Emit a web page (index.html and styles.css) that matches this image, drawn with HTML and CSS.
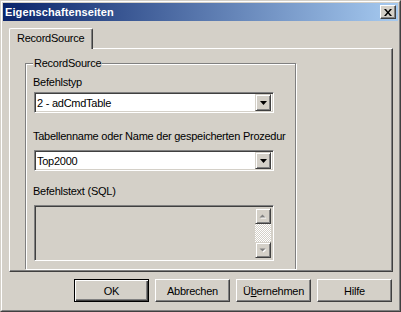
FILE: index.html
```html
<!DOCTYPE html>
<html lang="de">
<head>
    <meta charset="UTF-8">
    <title>Eigenschaftenseiten</title>
    <link rel="stylesheet" href="styles.css">
</head>
<body>
    <div class="window">
        <div class="frame">
            <div class="titlebar">
                <span class="title">Eigenschaftenseiten</span>
                <span class="close-btn">
                    <svg width="8" height="7" viewBox="0 0 8 7"><path d="M0 0h2l2 2.5L6 0h2L5 3.5 8 7H6L4 4.5 2 7H0l3-3.5z" fill="#000"/></svg>
                </span>
            </div>
            <div class="dialog-body">
                <div class="tabs">
                    <div class="tab active">RecordSource</div>
                </div>
                <div class="tab-panel">
                    <fieldset class="group">
                        <legend>RecordSource</legend>
                        <label class="field-label label-type">Befehlstyp</label>
                        <div class="combo combo-type">
                            <span class="combo-text">2 - adCmdTable</span>
                            <span class="combo-btn">
                                <svg width="7" height="4" viewBox="0 0 7 4"><path d="M0 0h7L3.5 4z" fill="#000"/></svg>
                            </span>
                        </div>
                        <label class="field-label label-table">Tabellenname oder Name der gespeicherten Prozedur</label>
                        <div class="combo combo-table">
                            <span class="combo-text">Top2000</span>
                            <span class="combo-btn">
                                <svg width="7" height="4" viewBox="0 0 7 4"><path d="M0 0h7L3.5 4z" fill="#000"/></svg>
                            </span>
                        </div>
                        <label class="field-label label-sql">Befehlstext (SQL)</label>
                        <div class="memo">
                            <div class="scrollbar">
                                <span class="scroll-btn">
                                    <svg width="8" height="5" viewBox="0 0 8 5"><path d="M1.5 4.5h6L4.5 1.5z" fill="#fff"/><path d="M0.5 3.5h6L3.5 0.5z" fill="#808080"/></svg>
                                </span>
                                <span class="scroll-track"></span>
                                <span class="scroll-btn">
                                    <svg width="8" height="5" viewBox="0 0 8 5"><path d="M1.5 1.5h6L4.5 4.5z" fill="#fff"/><path d="M0.5 0.5h6L3.5 3.5z" fill="#808080"/></svg>
                                </span>
                            </div>
                        </div>
                    </fieldset>
                </div>
                <div class="buttons">
                    <button class="btn default">OK</button>
                    <button class="btn">Abbrechen</button>
                    <button class="btn">Ü<span class="accel">b</span>ernehmen</button>
                    <button class="btn">Hilfe</button>
                </div>
            </div>
        </div>
    </div>
</body>
</html>
```

FILE: styles.css
```css
/* Classic Windows property dialog */
body {
    margin: 0;
    font-family: "Liberation Sans", Arial, sans-serif;
    font-size: 11px;
    letter-spacing: -0.25px;
    color: #000;
    background-color: #d4d0c8;
}

.window {
    width: 401px;
    height: 312px;
    box-sizing: border-box;
    border: 1px solid;
    border-color: #d4d0c8 #404040 #404040 #d4d0c8;
}

.frame {
    height: 100%;
    box-sizing: border-box;
    border: 1px solid;
    border-color: #fff #808080 #808080 #fff;
    padding: 1px;
    display: flex;
    flex-direction: column;
}

.titlebar {
    height: 18px;
    display: flex;
    align-items: center;
    justify-content: space-between;
    padding: 0 2px 0 2px;
    background: linear-gradient(to right, #0a246a, #a6caf0);
}

.title {
    color: #fff;
    font-weight: bold;
    font-size: 11px;
    letter-spacing: 0.1px;
}

.close-btn {
    width: 16px;
    height: 14px;
    box-sizing: border-box;
    display: flex;
    align-items: center;
    justify-content: center;
    background-color: #d4d0c8;
    border: 1px solid;
    border-color: #fff #404040 #404040 #fff;
    box-shadow: inset -1px -1px #808080;
}

.dialog-body {
    flex: 1;
    padding: 7px 5px 0 6px;
    display: flex;
    flex-direction: column;
}

.tabs {
    display: flex;
    height: 20px;
}

.tab {
    width: 84px;
    height: 21px;
    box-sizing: border-box;
    padding: 3px 0 0 7px;
    border: 1px solid;
    border-color: #fff #404040 transparent #fff;
    border-bottom: 0;
    border-radius: 2px 2px 0 0;
    box-shadow: inset -1px 0 #808080;
    background-color: #d4d0c8;
    position: relative;
    z-index: 1;
}

.tab-panel {
    height: 224px;
    box-sizing: border-box;
    border: 1px solid;
    border-color: #fff #404040 #404040 #fff;
    box-shadow: inset -1px -1px #808080;
    padding: 8px 0 2px 15px;
    display: flex;
    flex-direction: column;
}

.group {
    flex: 1;
    width: 271px;
    box-sizing: border-box;
    margin: 0;
    min-width: 0;
    padding: 0 0 0 7px;
    border: 1px solid #808080;
    border-bottom: 0;
    box-shadow: inset 1px 1px #fff, 1px 1px #fff;
}

.group legend {
    padding: 0 1px;
    line-height: 13px;
    background-color: #d4d0c8;
}

.field-label {
    display: block;
    line-height: 13px;
    height: 13px;
    white-space: nowrap;
}

.label-type {
    margin-top: 6px;
}

.label-table {
    margin-top: 17px;
}

.label-sql {
    margin-top: 14px;
}

.combo,
.memo {
    width: 240px;
    box-sizing: border-box;
    margin-left: 1px;
    border: 1px solid;
    border-color: #808080 #fff #fff #808080;
    box-shadow: inset 1px 1px #404040, inset -1px -1px #d4d0c8;
    padding: 2px;
}

.combo {
    height: 21px;
    display: flex;
    align-items: center;
    background-color: #fff;
}

.combo-type {
    margin-top: 3px;
}

.combo-table {
    margin-top: 7px;
}

.combo-text {
    flex: 1;
}

.combo-btn,
.scroll-btn {
    width: 16px;
    height: 17px;
    box-sizing: border-box;
    display: flex;
    align-items: center;
    justify-content: center;
    background-color: #d4d0c8;
    border: 1px solid;
    border-color: #d4d0c8 #404040 #404040 #d4d0c8;
    box-shadow: inset 1px 1px #fff, inset -1px -1px #808080;
}

.memo {
    height: 56px;
    margin-top: 7px;
    background-color: #d4d0c8;
    display: flex;
    justify-content: flex-end;
}

.scrollbar {
    width: 16px;
    display: flex;
    flex-direction: column;
}

.scroll-btn {
    height: 16px;
}

.scroll-track {
    flex: 1;
    background-image: repeating-conic-gradient(#fff 0 25%, #d4d0c8 0 50%);
    background-size: 2px 2px;
}

.buttons {
    margin-top: 7px;
    display: flex;
    justify-content: flex-end;
    gap: 6px;
    padding-right: 1px;
}

.btn {
    width: 75px;
    height: 23px;
    padding: 0;
    font-family: inherit;
    font-size: 11px;
    letter-spacing: -0.25px;
    color: #000;
    background-color: #d4d0c8;
    border: 1px solid;
    border-color: #fff #404040 #404040 #fff;
    box-shadow: inset -1px -1px #808080;
}

.btn.default {
    border-color: #000;
    box-shadow: inset 1px 1px #fff, inset -1px -1px #404040, inset -2px -2px #808080;
}

.accel {
    text-decoration: underline;
}
```
